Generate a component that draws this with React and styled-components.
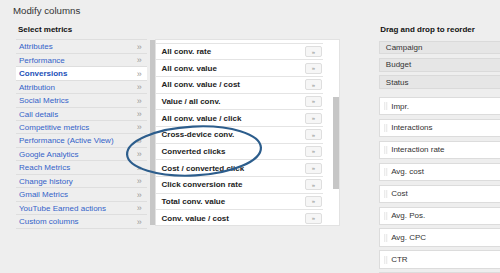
import React from "react";
import styled, { createGlobalStyle } from "styled-components";

const GlobalStyle = createGlobalStyle`
  html, body {
    margin: 0;
    padding: 0;
    background: #eeeeee;
  }
  * {
    box-sizing: border-box;
  }
`;

const categories = [
  "Attributes",
  "Performance",
  "Conversions",
  "Attribution",
  "Social Metrics",
  "Call details",
  "Competitive metrics",
  "Performance (Active View)",
  "Google Analytics",
  "Reach Metrics",
  "Change history",
  "Gmail Metrics",
  "YouTube Earned actions",
  "Custom columns",
];

const metrics = [
  "All conv. rate",
  "All conv. value",
  "All conv. value / cost",
  "Value / all conv.",
  "All conv. value / click",
  "Cross-device conv.",
  "Converted clicks",
  "Cost / converted click",
  "Click conversion rate",
  "Total conv. value",
  "Conv. value / cost",
];

const lockedColumns = ["Campaign", "Budget", "Status"];

const movableColumns = [
  "Impr.",
  "Interactions",
  "Interaction rate",
  "Avg. cost",
  "Cost",
  "Avg. Pos.",
  "Avg. CPC",
  "CTR",
  "",
];

function App() {
  return (
    <>
      <GlobalStyle />
      <Page>
        <Title>Modify columns</Title>
        <Columns>
          <MetricsSection>
            <Heading>Select metrics</Heading>
            <MetricsBody>
              <CategoryList>
                {categories.map((name) => (
                  <CategoryRow key={name} $active={name === "Conversions"}>
                    <span>{name}</span>
                    <CategoryArrow>»</CategoryArrow>
                  </CategoryRow>
                ))}
              </CategoryList>
              <SideScroll />
              <MetricPanel>
                <MetricList>
                  {metrics.map((name) => (
                    <MetricRow key={name}>
                      <span>{name}</span>
                      <AddButton>»</AddButton>
                    </MetricRow>
                  ))}
                </MetricList>
                <PanelTrack>
                  <PanelThumb />
                </PanelTrack>
              </MetricPanel>
            </MetricsBody>
          </MetricsSection>
          <OrderSection>
            <OrderHeading>Drag and drop to reorder</OrderHeading>
            {lockedColumns.map((name) => (
              <LockedItem key={name}>{name}</LockedItem>
            ))}
            <MovableList>
              {movableColumns.map((name, i) => (
                <MovableItem key={i}>
                  <Handle width="4" height="8" viewBox="0 0 4 8">
                    {[0, 2, 4, 6].map((y) =>
                      [0, 2].map((x) => (
                        <rect
                          key={`${x}-${y}`}
                          x={x + 0.25}
                          y={y + 0.5}
                          width="1"
                          height="1"
                          fill="#c9c9c9"
                        />
                      ))
                    )}
                  </Handle>
                  <span>{name}</span>
                </MovableItem>
              ))}
            </MovableList>
          </OrderSection>
        </Columns>
        <Circle width="500" height="273" viewBox="0 0 500 273">
          <ellipse
            cx="194"
            cy="151"
            rx="67"
            ry="24.5"
            transform="rotate(-3 194 151)"
            fill="none"
            stroke="#2c5d8c"
            strokeWidth="2.2"
          />
        </Circle>
      </Page>
    </>
  );
}

const Page = styled.div`
  position: relative;
  width: 500px;
  height: 273px;
  overflow: hidden;
  background: #eeeeee;
  padding: 4.7px 0 0 13px;
  font-family: "Liberation Sans", Arial, sans-serif;
`;

const Title = styled.div`
  font-size: 9.7px;
  line-height: 12px;
  color: #333;
`;

const Columns = styled.div`
  display: flex;
  margin-top: 6.3px;
`;

const MetricsSection = styled.div`
  display: flex;
  flex-direction: column;
  margin-left: 3px;
`;

const Heading = styled.div`
  height: 16.3px;
  padding: 1px 0 0 2px;
  font-size: 8px;
  font-weight: bold;
  line-height: 12px;
  color: #111;
`;

const MetricsBody = styled.div`
  display: flex;
  align-items: flex-start;
`;

const CategoryList = styled.div`
  width: 130.7px;
  border-top: 1px solid #dedede;
`;

const CategoryRow = styled.div`
  display: flex;
  justify-content: space-between;
  align-items: center;
  height: 13.46px;
  padding: 0.5px 5px 0 3px;
  border-bottom: 1px solid #dedede;
  background: ${(p) => (p.$active ? "#ffffff" : "transparent")};
  color: ${(p) => (p.$active ? "#1b4fb8" : "#3463c9")};
  font-size: 8px;
  font-weight: ${(p) => (p.$active ? "bold" : "normal")};
  white-space: nowrap;
`;

const CategoryArrow = styled.span`
  color: #9a9a9a;
  font-size: 9px;
  font-weight: normal;
`;

const SideScroll = styled.div`
  width: 5.5px;
  height: 185px;
  margin: 0.7px 0 0 3.3px;
  background: #c6c6c6;
`;

const MetricPanel = styled.div`
  display: flex;
  width: 185px;
  height: 186.7px;
  overflow: hidden;
  background: #ffffff;
  border: 1px solid #e2e2e2;
`;

const MetricList = styled.div`
  width: 167px;
  padding-top: 2.4px;
`;

const MetricRow = styled.div`
  display: flex;
  justify-content: space-between;
  align-items: center;
  height: 16.67px;
  padding: 0 1px 0 5px;
  border-top: 1px solid #e4e4e4;
  font-size: 8px;
  font-weight: bold;
  color: #222;
  white-space: nowrap;
`;

const AddButton = styled.div`
  display: flex;
  align-items: center;
  justify-content: center;
  width: 17px;
  height: 11px;
  border: 1px solid #dedede;
  border-radius: 2px;
  background: #f6f6f6;
  color: #8a8a8a;
  font-size: 6px;
  font-weight: normal;
`;

const PanelTrack = styled.div`
  margin-left: 10.5px;
  padding-top: 57px;
`;

const PanelThumb = styled.div`
  width: 6px;
  height: 92px;
  background: #c6c6c6;
`;

const OrderSection = styled.div`
  display: flex;
  flex-direction: column;
  flex: 1;
  margin-left: 38.7px;
`;

const OrderHeading = styled.div`
  height: 17.7px;
  padding: 1.5px 0 0 1px;
  font-size: 8px;
  font-weight: bold;
  line-height: 12px;
  color: #111;
  white-space: nowrap;
`;

const LockedItem = styled.div`
  display: flex;
  align-items: center;
  height: 13.8px;
  margin-bottom: 3.5px;
  padding-left: 5.7px;
  background: #e6e6e6;
  border: 1px solid #dadada;
  border-right: none;
  font-size: 8px;
  color: #333;
`;

const MovableList = styled.div`
  display: flex;
  flex-direction: column;
  gap: 3.56px;
  margin-top: 4.3px;
`;

const MovableItem = styled.div`
  display: flex;
  align-items: center;
  gap: 3.5px;
  height: 18.4px;
  padding-left: 3.5px;
  background: #ffffff;
  border: 1px solid #dcdcdc;
  border-right: none;
  font-size: 8px;
  color: #333;
`;

const Handle = styled.svg`
  flex-shrink: 0;
`;

const Circle = styled.svg`
  position: absolute;
  left: 0;
  top: 0;
  pointer-events: none;
`;

export default App;
